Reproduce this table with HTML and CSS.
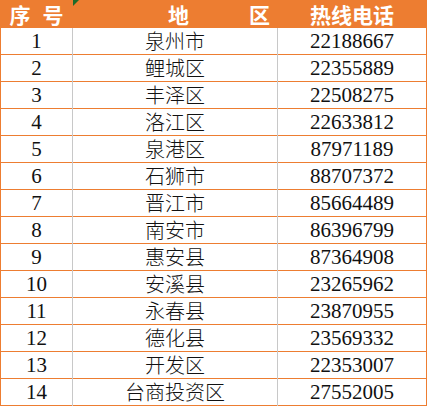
FILE: index.html
```html
<!DOCTYPE html>
<html lang="zh-CN">
<head>
<meta charset="utf-8">
<link rel="stylesheet" href="styles.css">
</head>
<body>
<table class="tbl">
  <thead>
    <tr>
      <th class="c1"><span>序</span><span class="h-hao">号</span></th>
      <th class="c2"><span class="flag"></span><span class="h-di">地</span><span class="h-qu">区</span></th>
      <th class="c3">热线电话</th>
    </tr>
  </thead>
  <tbody>
    <tr><td class="c1">1</td><td class="c2">泉州市</td><td class="c3">22188667</td></tr>
    <tr><td class="c1">2</td><td class="c2">鲤城区</td><td class="c3">22355889</td></tr>
    <tr><td class="c1">3</td><td class="c2">丰泽区</td><td class="c3">22508275</td></tr>
    <tr><td class="c1">4</td><td class="c2">洛江区</td><td class="c3">22633812</td></tr>
    <tr><td class="c1">5</td><td class="c2">泉港区</td><td class="c3">87971189</td></tr>
    <tr><td class="c1">6</td><td class="c2">石狮市</td><td class="c3">88707372</td></tr>
    <tr><td class="c1">7</td><td class="c2">晋江市</td><td class="c3">85664489</td></tr>
    <tr><td class="c1">8</td><td class="c2">南安市</td><td class="c3">86396799</td></tr>
    <tr><td class="c1">9</td><td class="c2">惠安县</td><td class="c3">87364908</td></tr>
    <tr><td class="c1">10</td><td class="c2">安溪县</td><td class="c3">23265962</td></tr>
    <tr><td class="c1">11</td><td class="c2">永春县</td><td class="c3">23870955</td></tr>
    <tr><td class="c1">12</td><td class="c2">德化县</td><td class="c3">23569332</td></tr>
    <tr><td class="c1">13</td><td class="c2">开发区</td><td class="c3">22353007</td></tr>
    <tr><td class="c1">14</td><td class="c2">台商投资区</td><td class="c3">27552005</td></tr>
  </tbody>
</table>
</body>
</html>
```

FILE: styles.css
```css
html, body {
  margin: 0;
  padding: 0;
  background: #ffffff;
}
.tbl {
  border-collapse: collapse;
  table-layout: fixed;
  width: 427px;
  font-family: "Liberation Serif", "Noto Sans CJK SC", serif;
  border-left: 1px solid #ed7d31;
  border-right: 1px solid #ed7d31;
  border-bottom: 1px solid #ed7d31;
}
.tbl th, .tbl td {
  padding: 0;
  text-align: center;
  white-space: nowrap;
}
.tbl th {
  height: 27px;
  background: #ed7d31;
  color: #ffffff;
  font-family: "Noto Sans CJK SC", sans-serif;
  font-weight: bold;
  font-size: 21px;
  line-height: 26px;
  position: relative;
  overflow: visible;
}
.tbl td {
  height: 26px;
  border-top: 1px solid #ed7d31;
  font-size: 21px;
  line-height: 26px;
  color: #111111;
  overflow: hidden;
}
.tbl td.c2 {
  font-family: "Noto Sans CJK SC", sans-serif;
  font-size: 20px;
  font-weight: 300;
}
.tbl td.c1, .tbl th.c1 {
  border-right: 1px solid #c8c8c8;
}
.tbl td.c2, .tbl th.c2 {
  border-right: 1px solid #c8c8c8;
}
.tbl th.c1, .tbl th.c2 {
  border-right-color: #ed7d31;
}
.c1 { width: 71px; }
.c2 { width: 204px; }
.c3 { width: auto; }
.h-hao {
  margin-left: 12px;
}
.tbl th.c2 {
  text-align: left;
}
.h-di {
  margin-left: 95px;
}
.h-qu {
  margin-left: 60px;
}
.flag {
  position: absolute;
  left: 0;
  top: 0;
  width: 0;
  height: 0;
  border-top: 6px solid #1e6b2a;
  border-right: 6px solid transparent;
}
```
